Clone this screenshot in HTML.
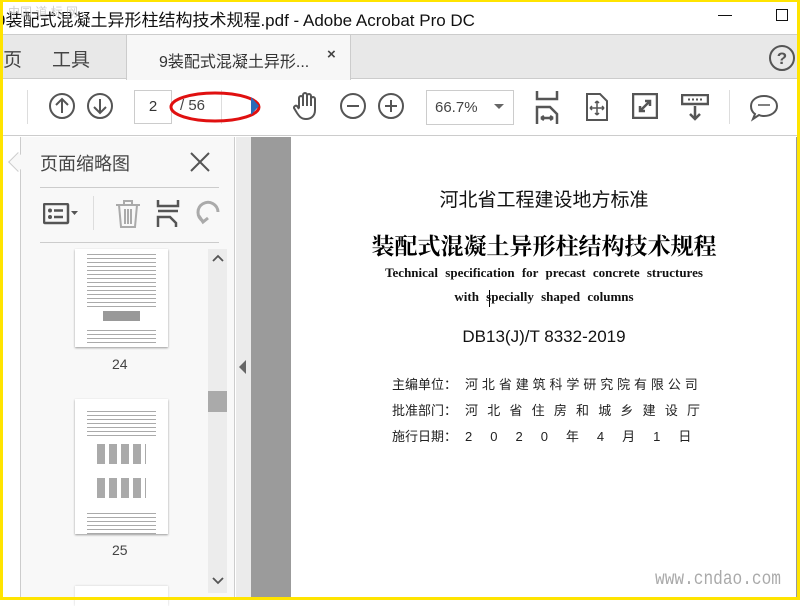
<!DOCTYPE html>
<html><head><meta charset="utf-8">
<style>
*{margin:0;padding:0;box-sizing:border-box}
body{width:800px;height:600px;overflow:hidden;background:#fff;font-family:"Liberation Sans","Noto Sans CJK SC",sans-serif;position:relative}
.abs{position:absolute}
.ic{position:absolute;stroke:#555;fill:none;stroke-width:2}
.tl{background:repeating-linear-gradient(#fff 0,#fff 3px,#aaa 3px,#aaa 4px)}
</style></head><body>
<div class="abs" style="left:0;top:0;width:800px;height:600px;border:3px solid #ffe400;border-top-width:2px;z-index:50;pointer-events:none"></div>

<div class="abs" style="left:0;top:2px;width:800px;height:33px;background:#fff;border-bottom:1px solid #ccc"></div>
<div class="abs" style="left:-4px;top:6px;font-size:17px;color:#111;white-space:nowrap">9装配式混凝土异形柱结构技术规程.pdf - Adobe Acrobat Pro DC</div>
<div class="abs" style="left:8px;top:3px;font-size:12px;color:#bbb;opacity:.7">中国 道 标 网</div>
<div class="abs" style="left:718px;top:15px;width:14px;height:1px;background:#111"></div>
<div class="abs" style="left:776px;top:9px;width:12px;height:12px;border:1px solid #111"></div>

<div class="abs" style="left:0;top:35px;width:800px;height:44px;background:#e8e8e8;border-bottom:1px solid #ccc"></div>
<div class="abs" style="left:3px;top:45px;font-size:19px;color:#444">页</div>
<div class="abs" style="left:52px;top:45px;font-size:19px;color:#444">工具</div>
<div class="abs" style="left:126px;top:35px;width:225px;height:45px;background:#f7f7f7;border-left:1px solid #ccc;border-right:1px solid #ccc"></div>
<div class="abs" style="left:159px;top:48px;font-size:16px;color:#333">9装配式混凝土异形...</div>
<div class="abs" style="left:327px;top:46px;font-size:15px;color:#444;font-weight:bold">×</div>
<svg class="ic" style="left:768px;top:44px" width="28" height="28"><circle cx="14" cy="14" r="12"/><text x="14" y="20" font-size="17" font-weight="bold" fill="#555" stroke="none" text-anchor="middle" font-family="Liberation Sans">?</text></svg>

<div class="abs" style="left:0;top:80px;width:800px;height:56px;background:#fff;border-bottom:1px solid #ccc"></div>
<div class="abs" style="left:27px;top:90px;width:1px;height:34px;background:#ddd"></div>
<svg class="ic" style="left:48px;top:92px" width="28" height="28"><circle cx="14" cy="14" r="12"/><path d="M14 21V7M8 13l6-6 6 6"/></svg>
<svg class="ic" style="left:86px;top:92px" width="28" height="28"><circle cx="14" cy="14" r="12"/><path d="M14 7v14M8 15l6 6 6-6"/></svg>
<div class="abs" style="left:134px;top:90px;width:38px;height:34px;border:1px solid #ccc;font-size:15px;color:#333;text-align:center;line-height:32px">2</div>
<div class="abs" style="left:180px;top:97px;font-size:15px;color:#444">/ 56</div>
<div class="abs" style="left:221px;top:90px;width:1px;height:34px;background:#ddd"></div>
<svg class="abs" style="left:168px;top:88px" width="96" height="38"><ellipse cx="47" cy="19" rx="44" ry="14" fill="none" stroke="#e01010" stroke-width="3"/></svg>
<svg class="abs" style="left:249px;top:95px" width="14" height="22"><path d="M2 2l8 9-8 9z" fill="#2a6ab8"/></svg>
<svg class="ic" style="left:291px;top:90px" width="30" height="32"><path d="M8 18V8a2 2 0 014 0v8V5a2 2 0 014 0v11V6a2 2 0 014 0v10V9a2 2 0 014 0v11c0 6-4 9-9 9s-7-3-9-6l-3-5a2 2 0 013-2l2 3"/></svg>
<svg class="ic" style="left:339px;top:92px" width="28" height="28"><circle cx="14" cy="14" r="12"/><path d="M8 14h12"/></svg>
<svg class="ic" style="left:377px;top:92px" width="28" height="28"><circle cx="14" cy="14" r="12"/><path d="M8 14h12M14 8v12"/></svg>
<div class="abs" style="left:426px;top:90px;width:88px;height:35px;border:1px solid #ccc;font-size:15px;color:#444;line-height:33px;padding-left:8px">66.7%</div>
<div class="abs" style="left:494px;top:104px;border-left:5px solid transparent;border-right:5px solid transparent;border-top:5px solid #666"></div>
<svg class="ic" style="left:534px;top:90px" width="26" height="34"><path d="M3 1v8h20V1M3 34V17h13l7 7v10M7 28h12M7 28l3-2M7 28l3 2M19 28l-3-2M19 28l-3 2" stroke-width="2.5"/></svg>
<svg class="ic" style="left:585px;top:92px" width="24" height="30"><path d="M2 2h13l7 7v19H2z"/><path d="M12 9v14M5 16h14M12 9l-2 2M12 9l2 2M12 23l-2-2M12 23l2-2M5 16l2-2M5 16l2 2M19 16l-2-2M19 16l-2 2" stroke-width="1.5"/></svg>
<svg class="ic" style="left:632px;top:93px" width="26" height="26"><rect x="1" y="1" width="24" height="24" stroke-width="2.5"/><path d="M8 18l10-10M13 8h5v5M8 13v5h5" stroke-width="2.5"/></svg>
<svg class="ic" style="left:681px;top:94px" width="28" height="28"><rect x="1" y="1" width="26" height="9" stroke-width="2.5"/><path d="M14 12v13M9 20l5 5 5-5" stroke-width="2.5"/><path d="M7 5.5h2M11 5.5h2M15 5.5h2M19 5.5h2" stroke-width="2"/></svg>
<div class="abs" style="left:729px;top:90px;width:1px;height:34px;background:#ddd"></div>
<svg class="ic" style="left:749px;top:94px" width="30" height="28"><path d="M15 2c7 0 13 4 13 10s-6 10-13 10c-2 0-3 0-5-1l-6 4 2-5C3 18 2 15 2 12 2 6 8 2 15 2z"/><path d="M9 11h12" stroke-width="1.5"/></svg>

<div class="abs" style="left:3px;top:137px;width:18px;height:463px;background:#fff"></div>
<div class="abs" style="left:20px;top:137px;width:215px;height:463px;background:#f8f8f8;border-left:1px solid #ccc;border-right:1px solid #ccc"></div>
<div class="abs" style="left:11px;top:155px;width:14px;height:14px;background:#f8f8f8;border-left:1px solid #ccc;border-bottom:1px solid #ccc;transform:rotate(45deg)"></div>
<div class="abs" style="left:40px;top:150px;font-size:18px;color:#444">页面缩略图</div>
<svg class="ic" style="left:189px;top:151px" width="22" height="22"><path d="M2 2l18 18M20 2L2 20"/></svg>
<div class="abs" style="left:40px;top:187px;width:179px;height:1px;background:#ccc"></div>
<svg class="ic" style="left:43px;top:203px" width="36" height="22"><rect x="1" y="1" width="24" height="19" rx="1" stroke-width="2.5"/><circle cx="7" cy="7.5" r="2" fill="#555" stroke="none"/><circle cx="7" cy="14" r="2" fill="#555" stroke="none"/><path d="M11 7.5h9M11 14h9" stroke-width="2.5"/><path d="M28 8h7l-3.5 4z" fill="#555" stroke="none"/></svg>
<div class="abs" style="left:93px;top:196px;width:1px;height:34px;background:#ddd"></div>
<svg class="ic" style="left:114px;top:199px" width="28" height="30"><path d="M2 6h24M10 6V2h8v4M5 6l2 22h14l2-22M11 10v15M14 10v15M17 10v15" stroke="#aaa" stroke-width="2"/></svg>
<svg class="ic" style="left:156px;top:200px" width="24" height="28"><path d="M2 0v6h20V0M2 11h20M2 27V17h12l6 6v4" stroke="#555" stroke-width="2.5"/></svg>
<svg class="ic" style="left:196px;top:200px" width="24" height="28"><path d="M22 12a10 10 0 10-15 9" stroke="#aaa" stroke-width="3"/><path d="M3 16l4 6 5-4" stroke="#aaa" stroke-width="3"/></svg>
<div class="abs" style="left:40px;top:242px;width:179px;height:1px;background:#ccc"></div>

<div class="abs" style="left:75px;top:249px;width:93px;height:98px;background:#fff;box-shadow:0 1px 2px #999;overflow:hidden">
 <div class="tl" style="margin:2px 12px 4px;height:56px"></div>
 <div style="margin:0 28px;height:10px;background:#999"></div>
 <div class="tl" style="margin:6px 12px;height:16px"></div>
</div>
<div class="abs" style="left:112px;top:356px;font-size:14px;color:#444">24</div>
<div class="abs" style="left:75px;top:399px;width:93px;height:135px;background:#fff;box-shadow:0 1px 2px #999;overflow:hidden">
 <div class="tl" style="margin:9px 12px 8px;height:28px"></div>
 <div style="margin:0 22px;height:20px;background:repeating-linear-gradient(90deg,#aaa 0,#aaa 8px,#fff 8px,#fff 12px)"></div>
 <div style="margin:14px 22px 12px;height:20px;background:repeating-linear-gradient(90deg,#aaa 0,#aaa 8px,#fff 8px,#fff 12px)"></div>
 <div class="tl" style="margin:0 12px;height:24px"></div>
</div>
<div class="abs" style="left:112px;top:542px;font-size:14px;color:#444">25</div>
<div class="abs" style="left:75px;top:586px;width:93px;height:20px;background:#fff;box-shadow:0 0 2px #ccc"></div>
<div class="abs" style="left:208px;top:249px;width:19px;height:344px;background:#ececec"></div>
<svg class="ic" style="left:212px;top:253px" width="12" height="10"><path d="M1 8l5-5 5 5" stroke-width="1.8"/></svg>
<svg class="ic" style="left:212px;top:576px" width="12" height="10"><path d="M1 2l5 5 5-5" stroke-width="1.8"/></svg>
<div class="abs" style="left:208px;top:391px;width:19px;height:21px;background:#aaa"></div>

<div class="abs" style="left:236px;top:137px;width:15px;height:463px;background:#ebebeb"></div>
<div class="abs" style="left:239px;top:360px;border-top:7px solid transparent;border-bottom:7px solid transparent;border-right:7px solid #666"></div>
<div class="abs" style="left:251px;top:137px;width:40px;height:463px;background:#9b9b9b"></div>

<div class="abs" style="left:291px;top:137px;width:506px;height:463px;background:#fff;border-right:1px solid #999"></div>
<div class="abs" style="left:291px;top:185px;width:506px;text-align:center;font-size:19px;color:#111">河北省工程建设地方标准</div>
<div class="abs" style="left:291px;top:228px;width:506px;text-align:center;font-size:23px;font-weight:bold;color:#000;font-family:'Noto Serif CJK SC',serif">装配式混凝土异形柱结构技术规程</div>
<div class="abs" style="left:291px;top:265px;width:506px;text-align:center;font-size:13px;font-weight:bold;color:#111;font-family:'Liberation Serif',serif;word-spacing:4px">Technical specification for precast concrete structures</div>
<div class="abs" style="left:291px;top:289px;width:506px;text-align:center;font-size:13px;font-weight:bold;color:#111;font-family:'Liberation Serif',serif;word-spacing:4px">with specially shaped columns</div>
<div class="abs" style="left:489px;top:290px;width:1px;height:17px;background:#000"></div>
<div class="abs" style="left:291px;top:327px;width:506px;text-align:center;font-size:17px;color:#111">DB13(J)/T 8332-2019</div>
<div class="abs" style="left:392px;top:374px;font-size:13px;color:#222;white-space:nowrap">主编单位：<span style="letter-spacing:3.9px;margin-left:8px">河北省建筑科学研究院有限公司</span></div>
<div class="abs" style="left:392px;top:400px;font-size:13px;color:#222;white-space:nowrap">批准部门：<span style="letter-spacing:9.2px;margin-left:8px">河北省住房和城乡建设厅</span></div>
<div class="abs" style="left:392px;top:426px;font-size:13px;color:#222;white-space:nowrap">施行日期：<span style="letter-spacing:18px;margin-left:8px">2020年4月1日</span></div>
<div class="abs" style="left:655px;top:568px;font-size:19px;color:#aaa;font-family:'Liberation Mono',monospace;transform:scaleX(.85);transform-origin:left">www.cndao.com</div>
</body></html>
